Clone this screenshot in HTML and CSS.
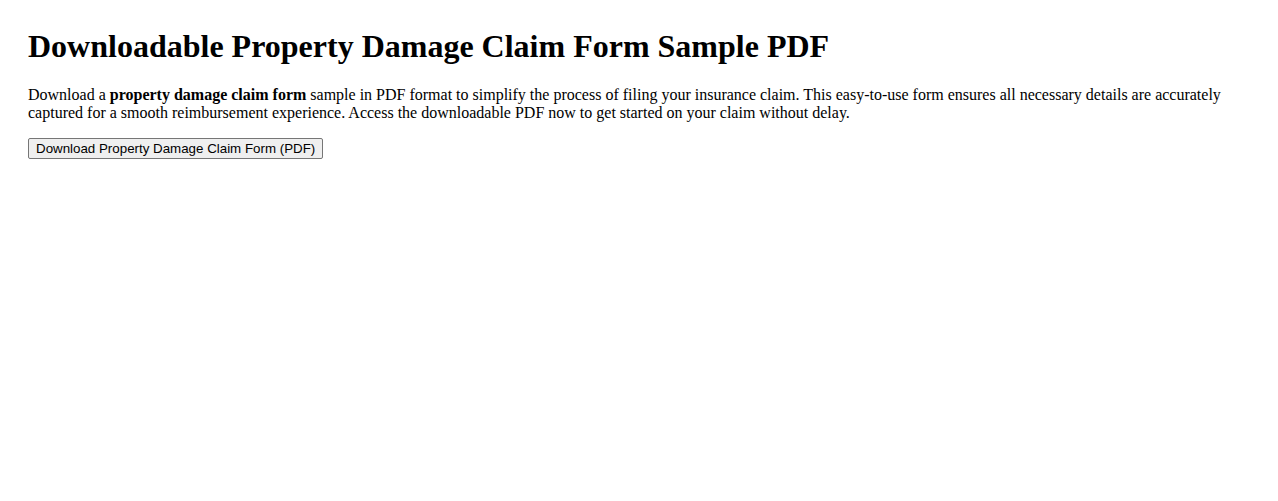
FILE: index.html
```html
<!DOCTYPE html>
<html lang="en">
<head>
  <meta charset="UTF-8" />
  <meta name="viewport" content="width=device-width, initial-scale=1.0"/>
  <title>Property Damage Claim Form Sample PDF</title>
  <link rel="stylesheet" href="styles.css">
</head>

<body>
  <div class="page">
    <h1>Downloadable Property Damage Claim Form Sample PDF</h1>
    <p>Download a <strong>property damage claim form</strong> sample in PDF format to simplify the process of filing your insurance claim. This easy-to-use form ensures all necessary details are accurately captured for a smooth reimbursement experience. Access the downloadable PDF now to get started on your claim without delay.</p>
    <button class="download-button" type="button">Download Property Damage Claim Form (PDF)</button>
  </div>
</body>
</html>
```

FILE: styles.css
```css
body {
  margin: 8px;
  font-family: "Liberation Serif", "Times New Roman", serif;
  color: #000;
  background: #fff;
}

.page {
  padding: 20px;
}

h1 {
  margin: 0 0 21.44px;
  font-size: 32px;
}

p {
  margin: 16px 0;
  font-size: 16px;
}

.download-button {
  font-family: "Liberation Sans", Arial, sans-serif;
  font-size: 13.33px;
  padding: 2px 7px;
  color: #000;
  background-color: #efefef;
  border: 1px solid #767676;
  border-radius: 2px;
}
```
